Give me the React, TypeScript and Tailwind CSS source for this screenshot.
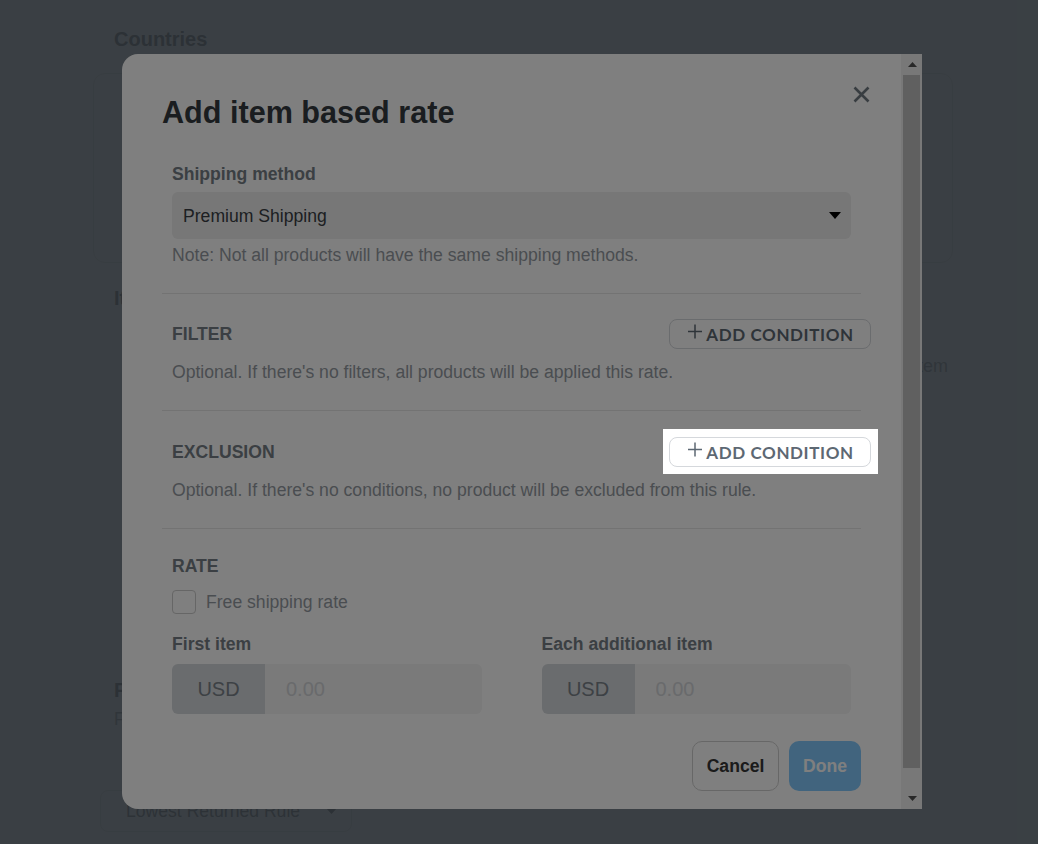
import React from "react";

function PlusIcon() {
  return (
    <svg width="14" height="15" viewBox="0 0 14 15" className="-mt-[6px] shrink-0" aria-hidden="true">
      <path d="M7 0.5V14.5M0 7.5H14" stroke="currentColor" strokeWidth="1.5" fill="none" />
    </svg>
  );
}

function AddConditionButton() {
  return (
    <button
      type="button"
      className="relative flex h-[30px] w-[202px] items-center justify-center gap-[4px] rounded-lg border border-[#d5d8dc] bg-white pl-[2px] font-['Lato',sans-serif] text-[17px] font-bold leading-none tracking-[0.6px] text-[#5d6873]"
    >
      <PlusIcon />
      <span>ADD CONDITION</span>
    </button>
  );
}

function MoneyInput() {
  return (
    <div className="flex h-[50px] overflow-hidden rounded-md">
      <div className="flex w-[93px] items-center justify-center bg-[#d4d8dc] text-[20px] text-[#7b838a]">USD</div>
      <input
        readOnly
        placeholder="0.00"
        className="min-w-0 flex-1 bg-[#f4f4f4] pl-[21px] text-[20px] outline-none placeholder:text-[#d2d5d8]"
      />
    </div>
  );
}

function Scrollbar() {
  return (
    <div className="flex w-[21px] shrink-0 flex-col bg-[#f1f1f1]">
      <div className="flex h-[21px] items-center justify-center pl-[1px]">
        <svg width="9" height="5" viewBox="0 0 9 5" aria-hidden="true">
          <path d="M0 5H9L4.5 0Z" fill="#505050" />
        </svg>
      </div>
      <div className="mx-[2px] h-[693px] bg-[#c1c1c1]" />
      <div className="flex-1" />
      <div className="flex h-[21px] items-center justify-center pl-[1px]">
        <svg width="9" height="5" viewBox="0 0 9 5" aria-hidden="true">
          <path d="M0 0H9L4.5 5Z" fill="#505050" />
        </svg>
      </div>
    </div>
  );
}

export default function App() {
  return (
    <div className="relative h-[844px] w-[1038px] overflow-hidden font-['Liberation_Sans',Arial,sans-serif]">
      {/* underlying page */}
      <div className="h-full bg-[#f0f4f8] pl-[93px] pt-[27px] text-[17.6px] leading-[24px]">
        <h2 className="ml-[21px] text-[20px] font-bold leading-[24px] text-[#5f666d]">Countries</h2>
        <div className="mt-[22px] h-[190px] w-[860px] rounded-xl border border-[#d3d9df]" />
        <h2 className="ml-[21px] mt-[23px] text-[20px] font-bold leading-[24px] text-[#5f666d]">Items</h2>
        <div className="mt-[44px] flex w-[860px] justify-end pr-[5px] text-[18px] text-[#8a9198]">Add item</div>
        <h3 className="ml-[21px] mt-[300px] text-[20px] font-bold leading-[24px] text-[#5f666d]">Fallback</h3>
        <p className="ml-[21px] mt-[5px] text-[#8a9198]">For</p>
        <div className="ml-[7px] mt-[59px] flex h-[42px] w-[252px] items-center justify-between rounded-lg border border-[#d3d9df] pl-[25px] pr-[14px] text-[#6a7178]">
          <span>Lowest Returned Rule</span>
          <svg width="11" height="6" viewBox="0 0 11 6" aria-hidden="true">
            <path d="M0 0H11L5.5 6Z" fill="#5f666d" />
          </svg>
        </div>
      </div>

      {/* modal backdrop */}
      <div className="absolute inset-0 bg-[#56626c]/80" />

      {/* modal */}
      <div className="absolute left-[122px] top-[54px] flex h-[755px] w-[800px] overflow-hidden rounded-l-2xl bg-white text-[17.6px] leading-[24px]">
        <div className="min-w-0 flex-1">
          <div className="relative ml-[40px] w-[699px] pb-[45px] pt-[40px]">
            <h1 className="text-[30.6px] font-bold leading-[36px] text-[#343a40]">Add item based rate</h1>
            <button type="button" aria-label="Close" className="absolute left-[691px] top-[32px] h-[17px] w-[17px] text-[#717a82]">
              <svg width="17" height="17" viewBox="0 0 17 17" aria-hidden="true">
                <path d="M1.5 1.5L15.5 15.5M15.5 1.5L1.5 15.5" stroke="currentColor" strokeWidth="2.6" fill="none" />
              </svg>
            </button>

            {/* shipping method */}
            <section className="mt-[32px] px-[10px] pb-[26px]">
              <label className="block font-bold text-[#767e86]">Shipping method</label>
              <div className="mt-[6px] flex h-[47px] items-center justify-between rounded-md bg-[#eeeeee] pl-[11px] pr-[10px] text-[#3a3f45]">
                <span>Premium Shipping</span>
                <svg width="12" height="7" viewBox="0 0 12 7" aria-hidden="true">
                  <path d="M0 0H12L6 7Z" fill="#000" />
                </svg>
              </div>
              <p className="mt-[4px] text-[#959ba2]">Note: Not all products will have the same shipping methods.</p>
            </section>

            {/* filter */}
            <section className="border-t border-[#e6e6e6] px-[10px] pb-[26px] pt-[25px]">
              <div className="-mr-[20px] flex h-[30px] items-center justify-between">
                <h3 className="font-bold text-[#767e86]">FILTER</h3>
                <AddConditionButton />
              </div>
              <p className="mt-[11px] text-[#959ba2]">Optional. If there's no filters, all products will be applied this rate.</p>
            </section>

            {/* exclusion */}
            <section className="border-t border-[#e6e6e6] px-[10px] pb-[26px] pt-[26px]">
              <div className="-mr-[20px] flex h-[30px] items-center justify-between">
                <h3 className="font-bold text-[#767e86]">EXCLUSION</h3>
                <div className="relative z-20">
                  <div className="absolute -bottom-[7px] -left-[6px] -right-[7px] -top-[8px] bg-white" />
                  <AddConditionButton />
                </div>
              </div>
              <p className="mt-[11px] text-[#959ba2]">Optional. If there's no conditions, no product will be excluded from this rule.</p>
            </section>

            {/* rate */}
            <section className="border-t border-[#e6e6e6] px-[10px] pt-[25px]">
              <h3 className="font-bold text-[#767e86]">RATE</h3>
              <label className="mt-[12px] flex items-center gap-[10px] text-[#959ba2]">
                <span className="h-[24px] w-[24px] rounded-[4px] border border-[#cccccc]" />
                <span>Free shipping rate</span>
              </label>
              <div className="mt-[18px] grid grid-cols-2 gap-x-[60px]">
                <div>
                  <div className="font-bold text-[#767e86]">First item</div>
                  <div className="mt-[8px]">
                    <MoneyInput />
                  </div>
                </div>
                <div>
                  <div className="font-bold text-[#767e86]">Each additional item</div>
                  <div className="mt-[8px]">
                    <MoneyInput />
                  </div>
                </div>
              </div>
            </section>

            <div className="mt-[27px] flex justify-end gap-[10px]">
              <button type="button" className="h-[50px] w-[87px] rounded-[10px] border border-[#cfcfcf] bg-white font-bold text-[#363636]">
                Cancel
              </button>
              <button type="button" className="h-[50px] w-[72px] rounded-[10px] bg-[#82c9fc] font-bold text-white">
                Done
              </button>
            </div>
          </div>
        </div>
        <Scrollbar />
      </div>

      {/* tour overlay */}
      <div className="absolute inset-0 z-10 bg-black/50" />
    </div>
  );
}
